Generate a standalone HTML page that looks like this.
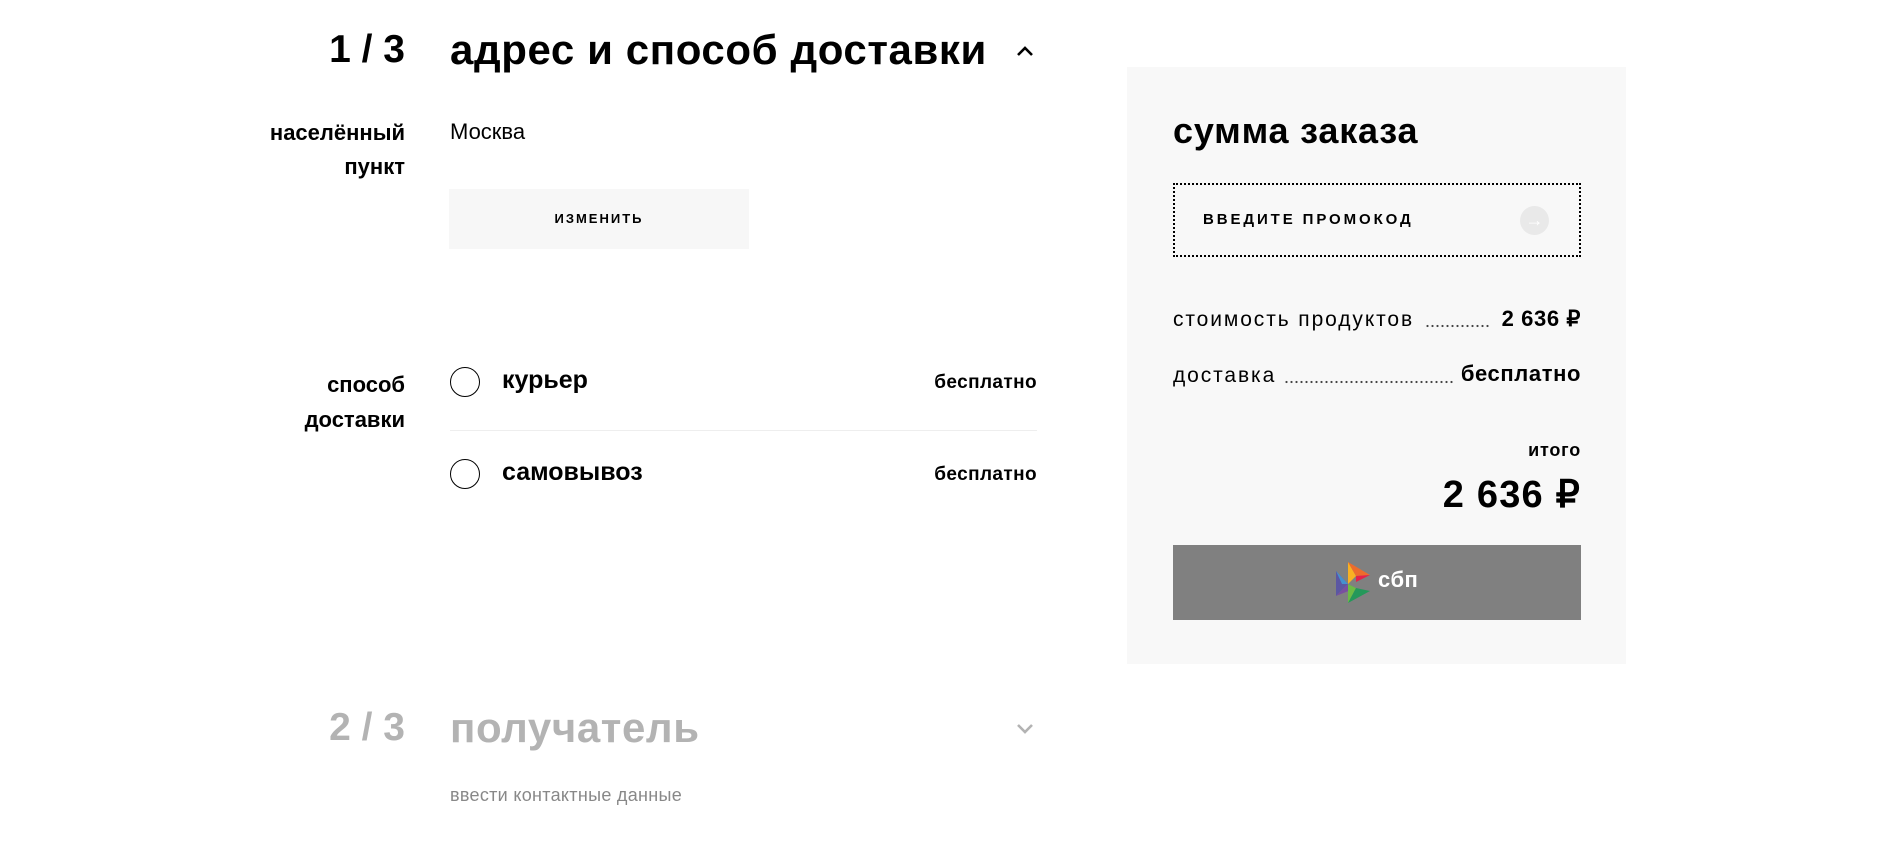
<!DOCTYPE html>
<html><head><meta charset="utf-8"><style>
*{margin:0;padding:0;box-sizing:border-box}
body{width:1884px;height:862px;background:#fff;font-family:"Liberation Sans",sans-serif;color:#000;position:relative;overflow:hidden}
.a{position:absolute;white-space:nowrap}
.r{text-align:right}
.dots{position:absolute;height:4px;background-image:radial-gradient(circle,#444 0.9px,transparent 1.3px);background-size:5px 4px}
</style></head><body>
<div class="a r" style="right:1479px;top:28px;font-size:39px;font-weight:bold">1 / 3</div>
<div class="a" style="left:450px;top:26px;font-size:42px;letter-spacing:0.6px;font-weight:bold">адрес и способ доставки</div>
<svg class="a" style="left:1015px;top:44px" width="20" height="14"><path d="M3 11 L10 4 L17 11" stroke="#000" stroke-width="2.6" fill="none"/></svg>

<div class="a r" style="right:1479px;top:116px;font-size:22px;line-height:34px;font-weight:bold">населённый<br>пункт</div>
<div class="a" style="left:450px;top:119px;font-size:22px">Москва</div>
<div class="a" style="left:449px;top:189px;width:300px;height:60px;background:#f7f7f7;font-size:13px;font-weight:bold;letter-spacing:2px;text-align:center;line-height:60px">ИЗМЕНИТЬ</div>

<div class="a r" style="right:1479px;top:367px;font-size:22px;line-height:35px;font-weight:bold">способ<br>доставки</div>
<div class="a" style="left:450px;top:367px;width:30px;height:30px;border:1.5px solid #000;border-radius:50%"></div>
<div class="a" style="left:502px;top:366px;font-size:25px;font-weight:bold">курьер</div>
<div class="a r" style="right:847px;top:372px;font-size:19px;font-weight:bold;letter-spacing:0.4px">бесплатно</div>
<div class="a" style="left:450px;top:430px;width:587px;height:1px;background:#eee"></div>
<div class="a" style="left:450px;top:459px;width:30px;height:30px;border:1.5px solid #000;border-radius:50%"></div>
<div class="a" style="left:502px;top:458px;font-size:25px;font-weight:bold">самовывоз</div>
<div class="a r" style="right:847px;top:464px;font-size:19px;font-weight:bold;letter-spacing:0.4px">бесплатно</div>

<div class="a r" style="right:1479px;top:706px;font-size:39px;font-weight:bold;color:#b3b3b3">2 / 3</div>
<div class="a" style="left:450px;top:704px;font-size:42px;letter-spacing:0.6px;font-weight:bold;color:#b3b3b3">получатель</div>
<svg class="a" style="left:1015px;top:722px" width="20" height="14"><path d="M3 3 L10 10 L17 3" stroke="#b3b3b3" stroke-width="2.6" fill="none"/></svg>
<div class="a" style="left:450px;top:785px;font-size:18px;color:#888;letter-spacing:0.3px">ввести контактные данные</div>

<div class="a" style="left:1127px;top:67px;width:499px;height:597px;background:#f8f8f8"></div>
<div class="a" style="left:1173px;top:110px;font-size:36px;font-weight:bold;letter-spacing:0.8px">сумма заказа</div>
<div class="a" style="left:1173px;top:183px;width:408px;height:74px;border:2px dotted #000"></div>
<div class="a" style="left:1203px;top:211px;font-size:15px;font-weight:bold;letter-spacing:2.9px">ВВЕДИТЕ ПРОМОКОД</div>
<div class="a" style="left:1520px;top:206px;width:29px;height:29px;border-radius:50%;background:#e9e9e9;color:#fff;font-size:18px;text-align:center;line-height:28px">→</div>
<div class="a" style="left:1173px;top:308px;font-size:21px;letter-spacing:1.9px">стоимость продуктов</div>
<div class="dots" style="left:1425px;top:324px;width:66px"></div>
<div class="a r" style="right:303px;top:306px;font-size:22px;font-weight:bold;letter-spacing:0.6px">2 636 ₽</div>
<div class="a" style="left:1173px;top:364px;font-size:21px;letter-spacing:1.9px">доставка</div>
<div class="dots" style="left:1284px;top:380px;width:170px"></div>
<div class="a r" style="right:303px;top:361px;font-size:22px;font-weight:bold;letter-spacing:0.6px">бесплатно</div>
<div class="a r" style="right:303px;top:440px;font-size:18px;font-weight:bold;letter-spacing:0.8px">итого</div>
<div class="a r" style="right:303px;top:472px;font-size:38px;font-weight:bold;letter-spacing:1.2px">2 636 ₽</div>
<div class="a" style="left:1173px;top:545px;width:408px;height:75px;background:#808080"></div>
<svg class="a" style="left:1336px;top:562px" width="40" height="42" viewBox="0 0 40 42">
<polygon points="0,9 12,22 0,34" fill="#5b57a2"/>
<polygon points="0,34 12,22 20,26" fill="#7a4fa0"/>
<polygon points="12,0 12,22 20,14" fill="#f9b122"/>
<polygon points="12,0 34,13 20,14" fill="#ed6c2c"/>
<polygon points="20,14 34,13 20,20" fill="#e5224a"/>
<polygon points="12,22 20,26 12,41" fill="#6dbb45"/>
<polygon points="12,41 34,29 20,26" fill="#24985a"/>
<polygon points="0,9 12,22 6,22" fill="#4591cf"/>
</svg>
<div class="a" style="left:1378px;top:567px;font-size:22px;font-weight:bold;color:#fff;letter-spacing:0.5px">сбп</div>
</body></html>
